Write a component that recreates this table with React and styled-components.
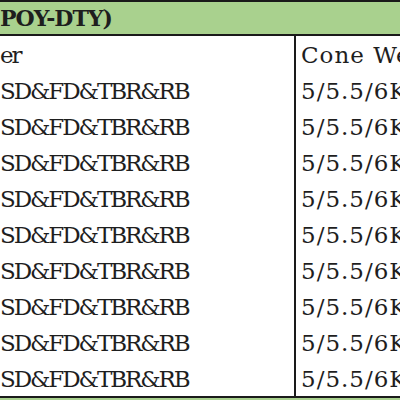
import React from "react";
import styled, { createGlobalStyle } from "styled-components";

const Global = createGlobalStyle`
  html, body { margin: 0; padding: 0; background: #ffffff; }
  body { width: 400px; height: 400px; overflow: hidden; }
`;

const Sheet = styled.div`
  width: 400px;
  height: 400px;
  overflow: hidden;
  background: #ffffff;
  font-family: "DejaVu Serif", "Liberation Serif", serif;
  color: #1e1e1e;
`;

const Band = styled.div`
  height: ${(p) => p.$h}px;
  background: #a9d18e;
  border-top: ${(p) => (p.$top ? "2px solid #1a1a1a" : "none")};
  border-bottom: ${(p) => (p.$bottom ? "2px solid #1a1a1a" : "none")};
  display: flex;
  align-items: center;
  font-weight: 700;
  font-size: 22px;
  letter-spacing: -1px;
  white-space: nowrap;
`;

const Grid = styled.div`
  display: grid;
  grid-template-columns: 294px 2px 1fr;
  grid-auto-rows: 36px;
  border-bottom: 2px solid #1a1a1a;
`;

const Cell = styled.div`
  display: flex;
  align-items: center;
  padding-left: ${(p) => p.$pad}px;
  padding-top: 2px;
  font-size: 23px;
  letter-spacing: ${(p) => p.$ls}px;
  white-space: nowrap;
  overflow: hidden;
`;

const Rule = styled.div`
  background: #1a1a1a;
  grid-row: 1 / span 10;
  grid-column: 2;
`;

const rows = [
  ["er", "Cone Weight"],
  ...Array.from({ length: 9 }, () => ["SD&FD&TBR&RB", "5/5.5/6KG"]),
];

export default function App() {
  return (
    <>
      <Global />
      <Sheet>
        <Band $h={32} $top $bottom>
          POY-DTY)
        </Band>
        <Grid>
          <Rule />
          {rows.map(([a, b], i) => (
            <React.Fragment key={i}>
              <Cell $pad={0} $ls={-2.1} style={{ gridRow: i + 1, gridColumn: 1 }}>{a}</Cell>
              <Cell $pad={5} $ls={1.0} style={{ gridRow: i + 1, gridColumn: 3 }}>{b}</Cell>
            </React.Fragment>
          ))}
        </Grid>
        <Band $h={4} />
      </Sheet>
    </>
  );
}
